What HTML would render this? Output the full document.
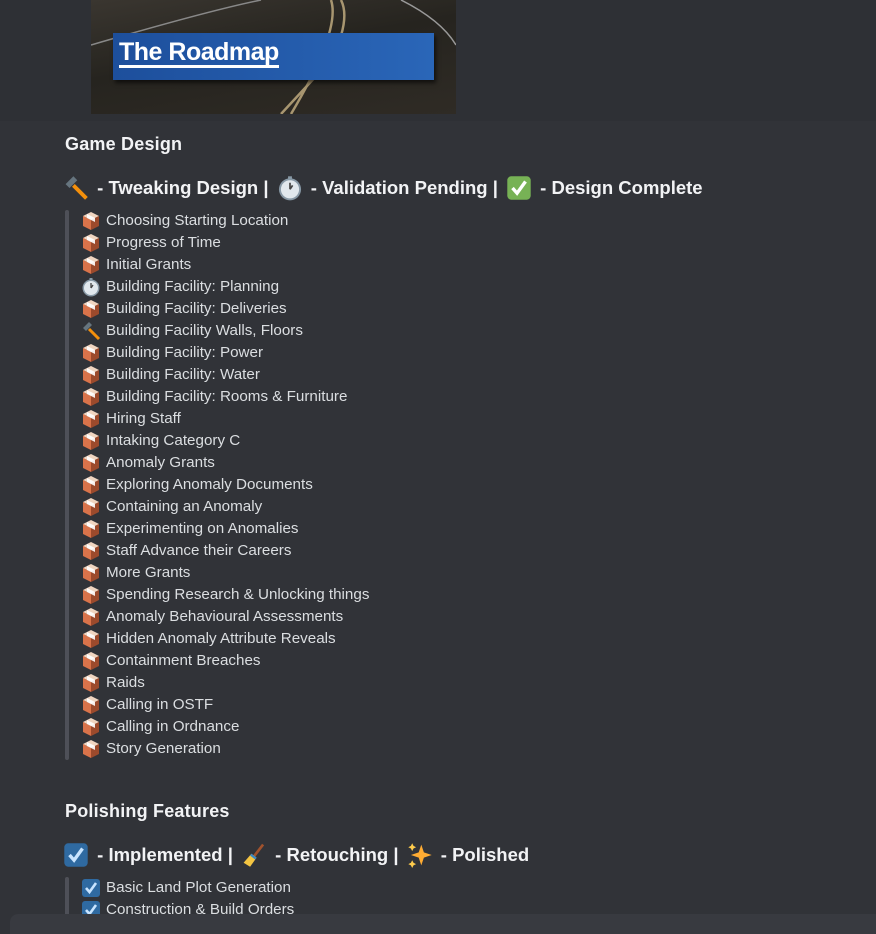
<!DOCTYPE html>
<html><head><meta charset="utf-8"><style>
*{margin:0;padding:0;box-sizing:border-box}
body{width:876px;height:927px;overflow:hidden;background:#313338;font-family:"Liberation Sans","DejaVu Sans",sans-serif;color:#dbdee1;position:relative}
.top{position:absolute;left:0;top:0;width:876px;height:121px;background:#2e3035}
.img{position:absolute;left:91px;top:0;width:365px;height:114px;background:linear-gradient(170deg,#3a3630 0%,#26241f 45%,#2f2b25 100%);overflow:hidden}
.banner{position:absolute;left:22px;top:33px;width:321px;height:47px;background:linear-gradient(90deg,#1d4f9c,#2a66b8);box-shadow:2px 3px 4px rgba(0,0,0,.6)}
.banner span{position:absolute;left:6px;top:6px;color:#fff;font-weight:bold;font-size:25px;letter-spacing:-0.5px;border-bottom:3px solid #fff;line-height:26px}
.h{position:absolute;left:65px;font-weight:bold;color:#f2f3f5}
.h1{font-size:18px;letter-spacing:0.2px}
.h2{font-size:18.5px;display:flex;align-items:center;white-space:pre;letter-spacing:0}
.bar{position:absolute;left:65px;width:4px;background:#4e5058;border-radius:2px}
.li{position:absolute;left:81px;height:22px;display:flex;align-items:center;font-size:15.2px;color:#dbdee1;padding-top:1px}
.li svg{width:20px;height:20px;margin-right:5px;flex:none}
.h2 svg{width:26px;height:26px;margin:0 3px}
.bottom{position:absolute;left:10px;top:914px;width:880px;height:20px;background:#383a40;border-radius:8px 0 0 0}
</style></head><body>
<svg width="0" height="0" style="position:absolute"><defs>
<symbol id="pk" viewBox="0 0 20 20"><polygon points="10,1 18,5 10,9 2,5" fill="#f0d5c0"/><polygon points="2,5 10,9 10,19 2,15" fill="#d9734a"/><polygon points="18,5 10,9 10,19 18,15" fill="#9c4a2c"/><polygon points="6,3 14,7 14,11 6,7" fill="#fff" opacity=".9"/></symbol>
<symbol id="ck" viewBox="0 0 20 20"><circle cx="10" cy="11" r="8.5" fill="#8899a6"/><circle cx="10" cy="11" r="7" fill="#e1e8ed"/><rect x="8.5" y="1" width="3" height="2" fill="#8899a6"/><path d="M10 11V6M10 11l2-3" stroke="#444" stroke-width="1.3" fill="none"/></symbol>
<symbol id="hm" viewBox="0 0 20 20"><path d="M8 8L18 18" stroke="#f4900c" stroke-width="3"/><path d="M2 7L8 1l3 3-6 6z" fill="#66757f"/></symbol>
<symbol id="cb" viewBox="0 0 20 20"><rect x="1" y="1" width="18" height="18" rx="3" fill="#2f6aa1"/><path d="M5 10l3.5 4L15 5" stroke="#c8e4ff" stroke-width="2.6" fill="none"/></symbol>
<symbol id="gc" viewBox="0 0 20 20"><rect x="1" y="1" width="18" height="18" rx="3" fill="#77b255"/><path d="M5 10l3.5 4L15 5" stroke="#fff" stroke-width="2.6" fill="none"/></symbol>
<symbol id="br" viewBox="0 0 20 20"><path d="M17 2L10 11" stroke="#a0522d" stroke-width="2"/><path d="M8 9l4 3-5 7-5-3z" fill="#f4c542"/><path d="M8 9l4 3-1 1.5-4-3z" fill="#3b88c3"/></symbol>
<symbol id="sp" viewBox="0 0 20 20"><path d="M11 2l2 6 6 2-6 2-2 6-2-6-6-2 6-2z" fill="#ffac33"/><path d="M4 1l1 2 2 1-2 1-1 2-1-2-2-1 2-1z" fill="#ffcc4d"/><path d="M4 14l1 2 2 1-2 1-1 2-1-2-2-1 2-1z" fill="#ffcc4d"/></symbol>
</defs></svg>
<div class="top"></div>
<div class="img">
<svg width="365" height="114" style="position:absolute;left:0;top:0"><path d="M0 45 Q120 10 170 0" stroke="#888" stroke-width="1.5" fill="none"/><path d="M250 0 Q260 20 240 60 L190 114" stroke="#a89670" stroke-width="2.5" fill="none"/><path d="M240 0 Q250 30 200 114" stroke="#a89670" stroke-width="2.5" fill="none"/><path d="M310 0 Q350 20 365 45" stroke="#999" stroke-width="1.5" fill="none"/></svg>
<div class="banner"><span>The Roadmap</span></div></div>
<div class="h h1" style="top:134px">Game Design</div>
<div class="h h2" style="top:175px"><svg style="margin-left:-2px"><use href="#hm"/></svg> - Tweaking Design | <svg><use href="#ck"/></svg> - Validation Pending | <svg><use href="#gc"/></svg> - Design Complete</div>
<div class="bar" style="top:210px;height:550px"></div>
<div class="li" style="top:209px"><svg><use href="#pk"/></svg>Choosing Starting Location</div>
<div class="li" style="top:231px"><svg><use href="#pk"/></svg>Progress of Time</div>
<div class="li" style="top:253px"><svg><use href="#pk"/></svg>Initial Grants</div>
<div class="li" style="top:275px"><svg><use href="#ck"/></svg>Building Facility: Planning</div>
<div class="li" style="top:297px"><svg><use href="#pk"/></svg>Building Facility: Deliveries</div>
<div class="li" style="top:319px"><svg><use href="#hm"/></svg>Building Facility Walls, Floors</div>
<div class="li" style="top:341px"><svg><use href="#pk"/></svg>Building Facility: Power</div>
<div class="li" style="top:363px"><svg><use href="#pk"/></svg>Building Facility: Water</div>
<div class="li" style="top:385px"><svg><use href="#pk"/></svg>Building Facility: Rooms &amp; Furniture</div>
<div class="li" style="top:407px"><svg><use href="#pk"/></svg>Hiring Staff</div>
<div class="li" style="top:429px"><svg><use href="#pk"/></svg>Intaking Category C</div>
<div class="li" style="top:451px"><svg><use href="#pk"/></svg>Anomaly Grants</div>
<div class="li" style="top:473px"><svg><use href="#pk"/></svg>Exploring Anomaly Documents</div>
<div class="li" style="top:495px"><svg><use href="#pk"/></svg>Containing an Anomaly</div>
<div class="li" style="top:517px"><svg><use href="#pk"/></svg>Experimenting on Anomalies</div>
<div class="li" style="top:539px"><svg><use href="#pk"/></svg>Staff Advance their Careers</div>
<div class="li" style="top:561px"><svg><use href="#pk"/></svg>More Grants</div>
<div class="li" style="top:583px"><svg><use href="#pk"/></svg>Spending Research &amp; Unlocking things</div>
<div class="li" style="top:605px"><svg><use href="#pk"/></svg>Anomaly Behavioural Assessments</div>
<div class="li" style="top:627px"><svg><use href="#pk"/></svg>Hidden Anomaly Attribute Reveals</div>
<div class="li" style="top:649px"><svg><use href="#pk"/></svg>Containment Breaches</div>
<div class="li" style="top:671px"><svg><use href="#pk"/></svg>Raids</div>
<div class="li" style="top:693px"><svg><use href="#pk"/></svg>Calling in OSTF</div>
<div class="li" style="top:715px"><svg><use href="#pk"/></svg>Calling in Ordnance</div>
<div class="li" style="top:737px"><svg><use href="#pk"/></svg>Story Generation</div>
<div class="h h1" style="top:801px">Polishing Features</div>
<div class="h h2" style="top:842px"><svg style="margin-left:-2px"><use href="#cb"/></svg> - Implemented | <svg><use href="#br"/></svg> - Retouching | <svg><use href="#sp"/></svg> - Polished</div>
<div class="bar" style="top:877px;height:40px"></div>
<div class="li" style="top:876px"><svg><use href="#cb"/></svg>Basic Land Plot Generation</div>
<div class="li" style="top:898px"><svg><use href="#cb"/></svg>Construction &amp; Build Orders</div>
<div class="bottom"></div>
</body></html>
